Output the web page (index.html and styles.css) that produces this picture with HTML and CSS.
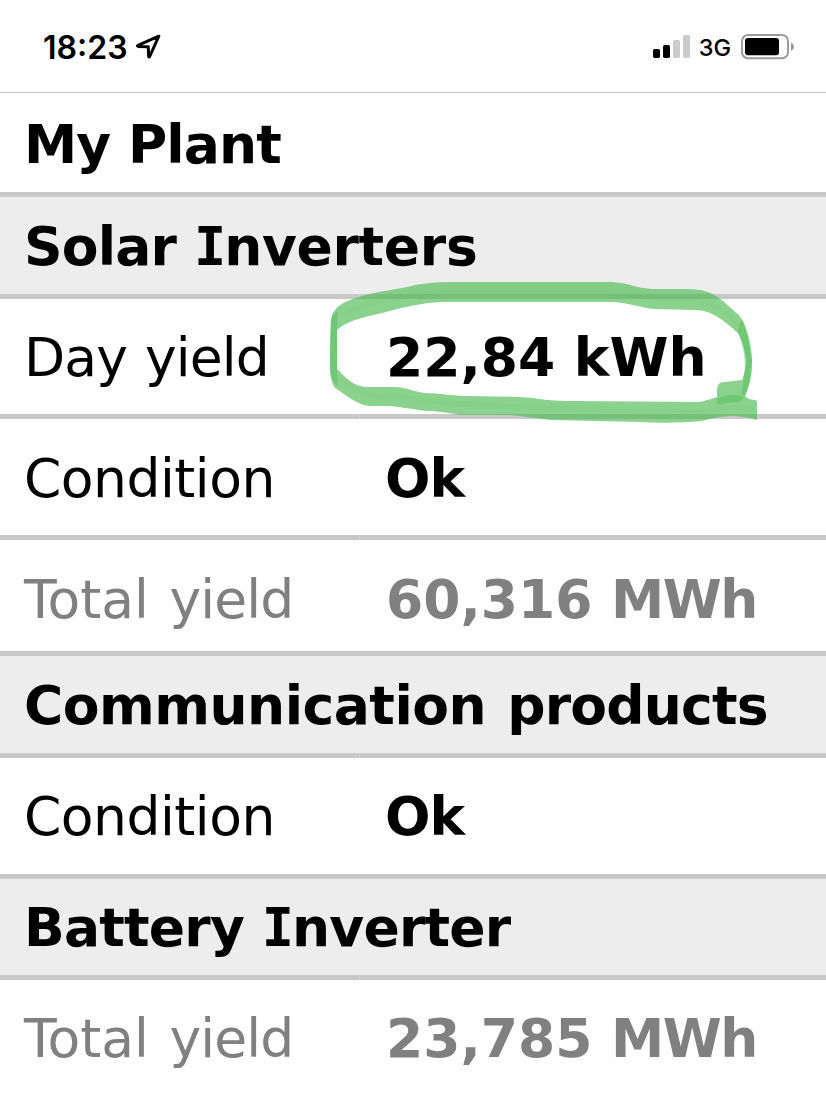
FILE: index.html
```html
<!DOCTYPE html>
<html lang="en">
<head>
<meta charset="utf-8">
<title>My Plant</title>
<link rel="stylesheet" href="styles.css">
</head>
<body>
<header class="status">
  <div class="status-left">
    <span class="time">18:23</span>
    <svg class="arrow" width="28" height="28" viewBox="0 0 28 28"><path d="M22.8 3.2 1.9 12.3Q.9 13.1 2.2 13.4L12.3 13.7 12.6 23.3Q12.9 24.5 13.7 23.5Z" fill="none" stroke="#000" stroke-width="3" stroke-linejoin="round"/></svg>
  </div>
  <div class="status-right">
    <svg class="signal" width="38" height="24" viewBox="0 0 38 24"><rect x="0" y="15" width="7" height="9" rx="1.7"/><rect x="10" y="11" width="7" height="13" rx="1.7"/><rect x="20" y="6" width="7" height="18" rx="1.7" fill="#cbcbcb"/><rect x="30" y="1" width="7" height="23" rx="1.7" fill="#cbcbcb"/></svg>
    <span class="network">3G</span>
    <svg class="battery" width="54" height="26" viewBox="0 0 54 26"><rect x="1" y="1" width="46" height="23.3" rx="6" fill="none" stroke="#999" stroke-width="1.9"/><rect x="4" y="4" width="34" height="17.3" rx="3"/><path d="M50 8.5Q53 10 53 12.8 53 15.5 50 17Z" fill="#999"/></svg>
  </div>
</header>
<main class="plant">
  <div class="row title"><b class="my">My Plant</b></div>
  <div class="row group"><b><span class="solar">Solar </span><span class="serif-i">I</span><span class="inverter">nverters</span></b></div>
  <div class="row pair day"><span class="label"><span class="tight">Day </span><span class="yield">yield</span></span><b>22,84 kWh</b></div>
  <div class="row pair cond"><span class="label tight">Condition</span><b class="ok">Ok</b></div>
  <div class="row pair total muted"><span class="label">Total<span class="yield far"> yield</span></span><b>60,316 <span class="unit">MWh</span></b></div>
  <div class="row group"><b><span class="communication">Communication </span><span class="products">products</span></b></div>
  <div class="row pair cond second"><span class="label tight">Condition</span><b class="ok">Ok</b></div>
  <div class="row group last"><b><span class="battery-word">Battery </span><span class="serif-i">I</span><span class="inverter">nverter</span></b></div>
  <div class="row pair final muted"><span class="label">Total<span class="yield far"> yield</span></span><b>23,785 <span class="unit">MWh</span></b></div>
</main>
<svg class="marker" width="440" height="150" viewBox="320 275 440 150">
  <path fill="#4fbb54" fill-opacity=".66" d="M330 365C330 345 330 335 331 320C333 306 345 301 362 296C382 290 398 290 415 285C427 283 437 282 450 282L608 282C628 282 636 289 656 289L688 289C716 289 724 303 739 315C747 325 750 345 752 360C752 377 749 387 745 396C748 399 752 400 755 400Q757 400 757 403L757 420C736 413 719 416 702 421C680 423 660 423 640 422L550 420C535 418 523 416 510 415L460 415C450 413 437 411 426 411C412 409 401 407 390 406L369 406C355 404 345 394 335 388C331 382 330 375 330 365ZM337 369C345 377 354 387 367 387L396 387C408 388 415 392 425 393C438 393 455 396 465 396L520 397C538 398 546 401 570 401L700 402C709 400 713 398 717 397L717 391C717 385 719 382 725 382L742 380C745 372 746 367 746 359C744 348 743 342 738 333C725 322 713 310 695 310L655 309C640 308 629 302 610 302L450 302C420 302 402 308 378 314C360 318 345 322 337 330Z"/>
  <g fill="#43b84a" fill-opacity=".38">
    <path d="M331 320Q333 312 338 312L337 330 337 369 338 387Q330 380 330 365Z"/>
    <path d="M738 333Q738 326 742 319C748 330 752 345 752 360C752 377 748 388 745 396L741 394C746 373 747 355 738 333Z"/>
    <path d="M717 399Q729 392 745 397L739 402Q728 402 717 405Z"/>
  </g>
  <path d="M342 316C370 298 405 297 440 292L610 292C640 297 655 299 695 299C715 304 730 315 740 326M340 380C363 397 375 397 399 397C440 403 480 406 525 407L702 412Q730 403 755 410" fill="none" stroke="#54ba59" stroke-opacity=".07" stroke-width="5"/>
</svg>
</body>
</html>
```
FILE: styles.css
```css
* { box-sizing: border-box; }
body { position: relative; width: 826px; height: 1119px; margin: 0; overflow: hidden; background: #fefefe; color: #000; font-family: "DejaVu Sans", sans-serif; }
.status { display: flex; justify-content: space-between; height: 93px; padding: 33px 31px 0 43px; border-bottom: 1px solid #c6c6c6; font-family: Inter, sans-serif; }
.status-left, .status-right { display: flex; align-items: flex-start; }
.time { font-size: 32px; line-height: 29px; font-weight: 600; }
.arrow { margin-left: 8px; }
.status-right { padding-top: 1px; }
.network { margin-left: 8px; font-size: 23.5px; line-height: 27px; font-weight: 500; }
.battery { margin-left: 10px; }
.row { display: flex; height: 121px; padding: 30px 0 0 24px; border-bottom: 5px solid #c8c8c8; font-size: 53.5px; line-height: 60px; white-space: pre; }
.label { width: 362px; flex: none; }
.muted { color: #808080; }
.title { height: 104px; padding-top: 22px; }
.group { height: 102px; padding-top: 20px; background: #ededed; }
.day { height: 120px; padding-top: 29px; }
.total { height: 116px; }
.second { padding-top: 29px; }
.last { height: 101px; padding-top: 19px; }
.final { height: 139px; padding-top: 29px; border-bottom: 0; }
/* hairline where the two table columns meet */
.pair { position: relative; }
.pair::before { content: ""; position: absolute; left: 359px; top: -5px; width: 1px; height: 5px; background: #d3d3d3; }
.my { letter-spacing: -.9px; }
.solar { letter-spacing: -.8px; }
.serif-i { margin-right: -2px; font-family: "DejaVu Sans Mono", monospace; line-height: 1; }
.inverter { letter-spacing: -.3px; }
.last .inverter { letter-spacing: -.8px; }
.tight { letter-spacing: -.5px; }
.yield { letter-spacing: -.9px; }
.day .yield { margin-left: 2px; }
.day .tight { letter-spacing: -.9px; }
.far { word-spacing: 4.5px; }
.ok { margin-left: -1px; letter-spacing: -1px; }
.unit { letter-spacing: -1.6px; }
.communication { letter-spacing: -.5px; }
.products { margin-left: 3px; letter-spacing: -.8px; }
.battery-word { letter-spacing: -.8px; }
.marker { position: absolute; left: 320px; top: 275px; }
```
